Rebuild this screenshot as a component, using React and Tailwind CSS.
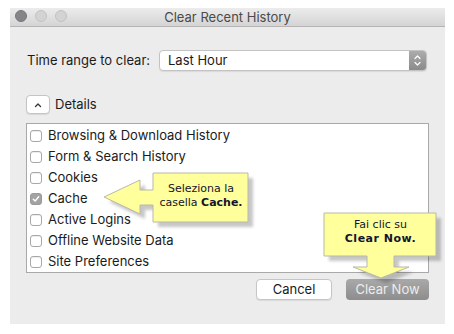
import React from 'react'

const items = [
  { label: 'Browsing & Download History', checked: false },
  { label: 'Form & Search History', checked: false },
  { label: 'Cookies', checked: false },
  { label: 'Cache', checked: true },
  { label: 'Active Logins', checked: false },
  { label: 'Offline Website Data', checked: false },
  { label: 'Site Preferences', checked: false },
]

const Checkbox = ({ checked }) => (
  checked ? (
    <span className="w-[12px] h-[12px] rounded-[3px] bg-[#a3a3a3] border border-[#9a9a9a] flex items-center justify-center">
      <svg width="8" height="8" viewBox="0 0 8 8">
        <path d="M1.3 4.2 L3.2 6 L6.7 1.8" fill="none" stroke="#fff" strokeWidth="1.4" strokeLinecap="round" strokeLinejoin="round" />
      </svg>
    </span>
  ) : (
    <span className="w-[12px] h-[12px] rounded-[3px] bg-white border border-[#a8a8a8] shadow-[inset_0_1px_0_#eee]" />
  )
)

const Callout = ({ points, children, textClass }) => (
  <>
    <svg className="absolute left-0 top-0 pointer-events-none" width="454" height="334">
      <defs>
        <filter id="blur" x="-10%" y="-10%" width="120%" height="120%">
          <feGaussianBlur stdDeviation="1.5" />
        </filter>
      </defs>
      <polygon points={points} fill="rgba(0,0,0,0.22)" transform="translate(5 5)" filter="url(#blur)" />
      <polygon points={points} fill="#ffff9c" stroke="#b9b9a6" strokeWidth="1" />
    </svg>
    <div className={`absolute text-center text-[11px] leading-[14px] text-[#14142e] font-['DejaVu_Sans',sans-serif] ${textClass}`}>
      {children}
    </div>
  </>
)

export default function App() {
  return (
    <div className="w-[454px] h-[334px] bg-white relative overflow-hidden font-['Inter',sans-serif] text-[13px] text-[#1b1b1b]">
      <div className="pt-[8px] pl-[10px]">
        <div className="w-[435px] h-[316px] bg-[#ececec] flex flex-col">
          <div className="h-[19px] relative flex items-center justify-center bg-gradient-to-b from-[#ececec] to-[#d4d4d4] border-b border-[#b4b4b4]">
            <div className="absolute left-[5px] top-[2px] flex gap-[8px]">
              <span className="w-[12px] h-[12px] rounded-full bg-[#858589] border border-[#77777a]" />
              <span className="w-[12px] h-[12px] rounded-full bg-[#d3d3d3] border border-[#c2c2c2]" />
              <span className="w-[12px] h-[12px] rounded-full bg-[#d3d3d3] border border-[#c2c2c2]" />
            </div>
            <span className="text-[13px] text-[#4a4a4a] leading-none">Clear Recent History</span>
          </div>

          <div className="px-[16px] flex flex-col">
            <div className="mt-[23px] flex items-center h-[21px]">
              <span className="w-[133px] pl-[1px]">Time range to clear:</span>
              <div className="flex-1 mr-[2px] h-[21px] flex bg-white rounded-[4px] border border-[#c3c3c3] shadow-[0_1px_1px_rgba(0,0,0,0.08)] overflow-hidden">
                <span className="flex-1 pl-[8px] leading-[19px]">Last Hour</span>
                <span className="w-[17px] bg-gradient-to-b from-[#acacac] to-[#8b8b8b] flex items-center justify-center">
                  <svg width="9" height="13" viewBox="0 0 9 13">
                    <path d="M2 4.5 L4.5 2 L7 4.5 M2 8.5 L4.5 11 L7 8.5" fill="none" stroke="#fff" strokeWidth="1.2" strokeLinecap="round" strokeLinejoin="round" />
                  </svg>
                </span>
              </div>
            </div>

            <div className="mt-[24px] flex items-center h-[19px]">
              <span className="w-[24px] h-[19px] bg-white rounded-[4px] border border-[#c4c4c4] shadow-[0_1px_1px_rgba(0,0,0,0.08)] flex items-center justify-center">
                <svg width="8" height="6" viewBox="0 0 8 6">
                  <path d="M1.5 4.5 L4 2 L6.5 4.5" fill="none" stroke="#333" strokeWidth="1.3" strokeLinecap="round" strokeLinejoin="round" />
                </svg>
              </span>
              <span className="ml-[5px]">Details</span>
            </div>

            <div className="mt-[9px] h-[150px] bg-white border border-[#a9a9a9] pt-[1px] pl-[3px]">
              {items.map((it) => (
                <div key={it.label} className="h-[21px] flex items-center gap-[6px]">
                  <Checkbox checked={it.checked} />
                  <span>{it.label}</span>
                </div>
              ))}
            </div>

            <div className="mt-[6px] flex justify-end gap-[14px]">
              <button className="w-[76px] h-[21px] bg-white rounded-[4px] border border-[#c6c6c6] shadow-[0_1px_1px_rgba(0,0,0,0.08)] text-[13px] text-[#1b1b1b]">Cancel</button>
              <button className="w-[83px] h-[21px] rounded-[4px] bg-gradient-to-b from-[#a9a9a9] to-[#8d8d8d] text-[13px] text-[#ececec]">Clear Now</button>
            </div>
          </div>
        </div>
      </div>

      <Callout
        points="153,173 248,173 248,222 153,222 153,205 140,205 140,214 104,197 140,180 140,190 153,190"
        textClass="left-[153px] top-[182px] w-[96px]"
      >
        Seleziona la<br />casella <b>Cache.</b>
      </Callout>
      <Callout
        points="324,213 436,213 436,256 394,256 394,267 409,267 381,278 353,267 367,267 367,256 324,256"
        textClass="left-[324px] top-[218px] w-[113px]"
      >
        Fai clic su<br /><b className="tracking-[0.5px]">Clear Now.</b>
      </Callout>
    </div>
  )
}
